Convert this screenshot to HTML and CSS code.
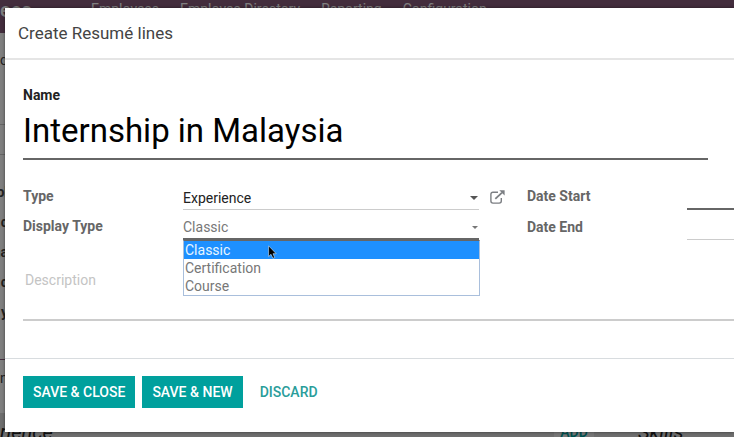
FILE: index.html
```html
<!DOCTYPE html>
<html lang="en">
<head>
    <meta charset="UTF-8">
    <meta name="viewport" content="width=device-width, initial-scale=1.0">
    <title>Create Resumé lines</title>
    <link rel="stylesheet" href="styles.css">
</head>
<body>
    <!-- Employee form behind the dialog -->
    <div class="page">
        <header class="navbar">
            <span class="brand">ees</span>
            <nav class="menu">
                <a href="#">Employees</a>
                <a href="#">Employee Directory</a>
                <a href="#">Reporting</a>
                <a href="#">Configuration</a>
            </nav>
        </header>
        <div class="breadcrumb">c</div>
        <div class="statusbar"></div>
        <div class="sheet">
            <b>ol</b>
            <b>c</b>
            <b>na</b>
            <b>c</b>
            <b>y</b>
        </div>
        <div class="tabs">n</div>
        <div class="sections">
            <h2>rience</h2>
            <span class="add">ADD</span>
            <h2>Skills</h2>
        </div>
    </div>
    <div class="backdrop"></div>

    <div class="dialog" role="dialog" aria-labelledby="dialog-title">
        <div class="dialog-header">
            <h1 id="dialog-title">Create Resumé lines</h1>
        </div>
        <form id="resume-form" class="dialog-body">
            <div class="name-group">
                <label for="name">Name</label>
                <input type="text" id="name" name="name" value="Internship in Malaysia">
            </div>

            <div class="fields">
                <label for="type">Type</label>
                <div class="field">
                    <input type="text" id="type" name="type" value="Experience">
                    <svg class="caret" width="8" height="4" viewBox="0 0 8 4"><path d="M0 0h8L4 4z"/></svg>
                </div>
                <button type="button" class="external" aria-label="External link">
                    <svg width="15" height="14" viewBox="0 0 15 14" fill="none" stroke="#7c7f83" stroke-width="1.4">
                        <path d="M8 2.2H3Q.9 2.2.9 4.300V11Q.9 13.100 3 13.100H9.200Q11.300 13.100 11.300 11V8"/>
                        <path d="M5.300 8.900L12 2.600" stroke-width="1.800"/>
                        <path d="M9.300.3H14.600V5.600z" fill="#7c7f83" stroke="none"/>
                    </svg>
                </button>
                <label for="date-start">Date Start</label>
                <input type="text" class="date active" id="date-start" name="date_start">

                <label for="display-type">Display Type</label>
                <div class="field open">
                    <select id="display-type" name="display_type">
                        <option selected>Classic</option>
                        <option>Certification</option>
                        <option>Course</option>
                    </select>
                    <svg class="caret small" width="6" height="3" viewBox="0 0 6 3"><path d="M0 0h6L3 3z"/></svg>
                    <ul class="options" role="listbox" aria-label="Display Type">
                        <li class="selected" role="option" aria-selected="true">Classic</li>
                        <li role="option">Certification</li>
                        <li role="option">Course</li>
                    </ul>
                    <svg class="pointer" width="9" height="14" viewBox="0 0 9 14"><path d="M.6.800V11.500L3 9.300 4.900 13.300 6.700 12.500 5 8.700H8.200z" fill="#000" stroke="#cfe6fb" stroke-width=".6"/></svg>
                </div>
                <label for="date-end" class="date-end-label">Date End</label>
                <input type="text" class="date" id="date-end" name="date_end">
            </div>

            <textarea class="description" name="description" placeholder="Description" aria-label="Description"></textarea>
        </form>
        <div class="dialog-footer">
            <button type="submit" form="resume-form" class="btn">SAVE &amp; CLOSE</button>
            <button type="submit" form="resume-form" class="btn">SAVE &amp; NEW</button>
            <button type="button" class="btn btn-link">DISCARD</button>
        </div>
    </div>
</body>
</html>
```
FILE: styles.css
```css
* {
    box-sizing: border-box;
}

body {
    margin: 0;
    height: 100vh;
    overflow: hidden;
    position: relative;
    font-family: Roboto, Arial, sans-serif;
    font-size: 14px;
    color: #666;
}

input,
select,
textarea,
button {
    font-family: inherit;
    font-size: 14px;
    border: 0;
    border-radius: 0;
    padding: 0;
    margin: 0;
    background: none;
    outline: none;
}

/* Page behind */
.page {
    height: 100vh;
    overflow: hidden;
    background-color: #fff;
    color: #444;
}

.navbar {
    display: flex;
    align-items: flex-start;
    height: 33px;
    background-color: #875a7b;
    color: #fff;
}

.brand {
    width: 91px;
    font-size: 20px;
    font-weight: 500;
    line-height: 20px;
}

.menu {
    display: flex;
    gap: 21px;
    line-height: 18px;
}

.menu a {
    color: #fff;
    text-decoration: none;
}

.breadcrumb {
    height: 92px;
    line-height: 54px;
    border-bottom: 1px solid #ccc;
}

.statusbar {
    height: 30px;
    border-bottom: 1px solid #ccc;
}

.sheet {
    height: 205px;
    padding-top: 22px;
    line-height: 30px;
    border-bottom: 1px solid #875a7b;
}

/* only the ends of the labels stick out left of the dialog */
.sheet b {
    display: flex;
    justify-content: flex-end;
    width: 8px;
}

.tabs {
    height: 53px;
    line-height: 36px;
}

.sections {
    display: grid;
    grid-template-columns: 554px 84px 1fr;
    height: 40px;
    line-height: 38px;
    background-color: #ddd;
}

.sections h2 {
    margin: 0;
    font-size: 20px;
    font-weight: 400;
    font-style: italic;
    color: #222;
}

.add {
    width: 40px;
    background-color: #eee;
    color: #00a09d;
    text-align: center;
    font-weight: 500;
}

.backdrop {
    position: absolute;
    inset: 0;
    background-color: rgba(0, 0, 0, 0.5);
}

/* Dialog */
.dialog {
    position: absolute;
    top: 8px;
    left: 5px;
    right: 0;
    background-color: #fff;
    box-shadow: 0 0 3px rgba(0, 0, 0, 0.5);
}

.dialog-header {
    padding: 0 13px;
    border-bottom: 2px solid #e5e5e5;
}

.dialog-header h1 {
    margin: 0;
    font-size: 17px;
    font-weight: 400;
    line-height: 50px;
    color: #444;
}

.dialog-body {
    padding: 25px 0 37px 18px;
}

label {
    font-weight: 700;
    line-height: 20px;
}

.name-group {
    display: flex;
    flex-direction: column;
    margin-right: 26px;
}

.name-group label {
    color: #222;
}

.name-group input {
    width: 100%;
    height: 55px;
    padding-bottom: 2px;
    border-bottom: 2px solid #666;
    font-size: 33px;
    color: #000;
}

.fields {
    display: grid;
    grid-template-columns: 160px minmax(0, 1fr) 48px 160px 47px;
    grid-template-rows: 24px 30px;
    margin-top: 26px;
}

.field {
    display: flex;
    align-items: center;
    position: relative;
    height: 24px;
    border-bottom: 1px solid #ccc;
}

.field input,
.field select {
    flex: 1;
    min-width: 0;
    color: #222;
    appearance: none;
}

.field.open {
    height: 30px;
    padding-top: 6px;
    border-bottom: 2px solid #666;
}

.field select {
    color: #777;
}

.caret {
    position: absolute;
    right: 1px;
    fill: #555;
}

.caret.small {
    fill: #777;
}

.external {
    width: 15px;
    height: 22px;
    margin-left: 11px;
}

.external svg {
    display: block;
}

.fields label[for="display-type"] {
    line-height: 32px;
}

.date-end-label {
    grid-column: 4;
    line-height: 34px;
}

.date {
    width: 100%;
    border-bottom: 1px solid #ccc;
}

.date.active {
    border-bottom: 2px solid #666;
}

.options {
    position: absolute;
    top: calc(100% + 2px);
    left: 0;
    right: -1px;
    margin: 0;
    padding: 0;
    list-style: none;
    line-height: 18px;
    background-color: #fff;
    border: 1px solid #a9bfdc;
    border-top-color: #666;
    z-index: 1;
}

.options li {
    padding-left: 1px;
    color: #777;
}

.options .selected {
    background-color: #1e90ff;
    color: #e8f6ff;
}

.pointer {
    position: absolute;
    left: 85px;
    top: 35px;
    z-index: 2;
}

.description {
    display: block;
    width: 100%;
    height: 57px;
    margin-top: 24px;
    padding: 8px 2px;
    border-bottom: 2px solid #ccc;
    resize: none;
}

.description::placeholder {
    color: #c4c4c4;
}

.dialog-footer {
    display: flex;
    gap: 7px;
    padding: 17px 18px 24px;
    border-top: 1px solid #d8dcdf;
}

.btn {
    height: 32px;
    padding: 0 10px;
    background-color: #00a09d;
    color: #fff;
    font-weight: 500;
    cursor: pointer;
}

.btn-link {
    background: none;
    color: #2a9d9a;
}
```
